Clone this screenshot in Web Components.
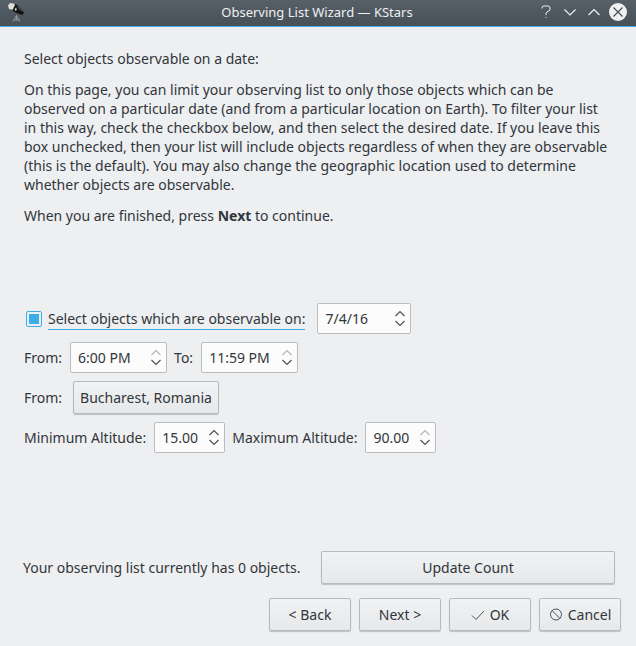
<!DOCTYPE html>
<html lang="en">
<head>
<meta charset="utf-8">
<meta name="viewport" content="width=device-width, initial-scale=1">
<title>Observing List Wizard — KStars</title>
<style>
    body {
        margin: 0;
        background: #eeeff1;
        color: #31363b;
        font: 14px/19px "Noto Sans", sans-serif;
    }
</style>
</head>
<body>
<kstars-wizard></kstars-wizard>

<script>
class WindowTitlebar extends HTMLElement {
    constructor() {
        super();
        const shadow = this.attachShadow({ mode: 'open' });
        shadow.innerHTML = `
            <style>
                :host {
                    display: grid;
                    grid-template-columns: 1fr auto 1fr;
                    align-items: center;
                    height: 24px;
                    padding: 0 9px 2px 7px;
                    background: linear-gradient(#566068, #475057);
                    border-bottom: 1px solid #3daee9;
                    color: #eff0f1;
                    font-size: 13px;
                }
                svg { display: block; }
                h1 {
                    margin: 0;
                    font-size: inherit;
                    font-weight: normal;
                }
                .controls {
                    display: flex;
                    justify-content: flex-end;
                    gap: 6px;
                }
                button {
                    padding: 0;
                    border: 0;
                    background: none;
                    color: inherit;
                }
            </style>
            <svg width="18" height="22" viewBox="0 0 18 22" aria-hidden="true">
                <path d="M6 20.500l3.500-6 3.500 6M9.500 14v5M7 19h5" fill="none" stroke="#90979b" stroke-width="1"/>
                <path d="M5 2l5 2 7 7.500-1.500 2.500-6-2L3 8z" fill="#101214"/>
                <path d="M1 4.500L3 2l4 .5 1 1.500-2.500 5L2 8z" fill="#deded9"/>
                <path d="M7.500 9l1-2.500L10 8l-1 2z" fill="#c4c4be"/>
                <path d="M10 5.500l5 5" stroke="#666" stroke-width="1"/>
            </svg>
            <h1><slot></slot></h1>
            <div class="controls">
                <button aria-label="Help"><svg width="18" height="18" viewBox="0 0 18 18" fill="none" stroke="currentColor"><path d="M5 5.500V5q0-2 2-2h4q2 0 2 2v1q0 1-1 2l-2 1q-1 .5-1 1.500V12M8.500 14.500h1"/></svg></button>
                <button aria-label="Minimize"><svg width="18" height="18" viewBox="0 0 18 18" fill="none" stroke="currentColor" stroke-width="1.200"><path d="M3.500 6.500L9 12l5.500-5.500"/></svg></button>
                <button aria-label="Maximize"><svg width="18" height="18" viewBox="0 0 18 18" fill="none" stroke="currentColor" stroke-width="1.200"><path d="M3.500 12L9 6.500l5.500 5.500"/></svg></button>
                <button aria-label="Close"><svg width="18" height="18" viewBox="0 0 18 18"><circle cx="9" cy="9" r="9" fill="#eff0f1"/><path d="M4.500 4.500l9 9M13.500 4.500l-9 9" stroke="#475057" stroke-width="1.200"/></svg></button>
            </div>
        `;
    }
}

class SpinField extends HTMLElement {
    constructor() {
        super();
        const shadow = this.attachShadow({ mode: 'open' });
        shadow.innerHTML = `
            <style>
                :host {
                    display: inline-flex;
                    align-items: center;
                    box-sizing: border-box;
                    width: var(--spin-width, 97px);
                    height: 31px;
                    padding: 0 4px 0 7px;
                    border: 1px solid #bbbdbf;
                    border-radius: 2px;
                    background: #fcfcfc;
                }
                input {
                    flex: 1;
                    min-width: 0;
                    padding: 0;
                    border: 0;
                    outline: 0;
                    background: none;
                    color: inherit;
                    font: inherit;
                }
                .arrows {
                    display: flex;
                    flex-direction: column;
                }
                button {
                    padding: 0;
                    border: 0;
                    background: none;
                    color: #4d5257;
                }
                button:disabled { color: #b4b6b8; }
                svg { display: block; }
            </style>
            <input type="text">
            <div class="arrows">
                <button class="up" tabindex="-1" aria-label="Increase"><svg width="12" height="9" viewBox="0 0 12 9" fill="none" stroke="currentColor" stroke-width="1.200"><path d="M1.500 6L6 1.500 10.500 6"/></svg></button>
                <button tabindex="-1" aria-label="Decrease"><svg width="12" height="9" viewBox="0 0 12 9" fill="none" stroke="currentColor" stroke-width="1.200"><path d="M1.500 2L6 6.500 10.500 2"/></svg></button>
            </div>
        `;
    }

    connectedCallback() {
        const input = this.shadowRoot.querySelector('input');
        input.value = this.getAttribute('value') || '';
        input.setAttribute('aria-label', this.getAttribute('label') || '');
        this.shadowRoot.querySelector('.up').disabled = this.hasAttribute('at-max');
    }
}

class PushButton extends HTMLElement {
    constructor() {
        super();
        const shadow = this.attachShadow({ mode: 'open' });
        shadow.innerHTML = `
            <style>
                :host { display: inline-flex; }
                button {
                    flex: 1;
                    display: flex;
                    align-items: center;
                    justify-content: center;
                    gap: 5px;
                    height: 33px;
                    padding: 0 6px;
                    border: 1px solid #b8babc;
                    border-radius: 2px;
                    background: linear-gradient(#f1f2f3, #e7e8ea);
                    box-shadow: 0 1px 1px #0003;
                    color: inherit;
                    font: inherit;
                    white-space: nowrap;
                }
            </style>
            <button type="button"><slot name="icon"></slot><slot></slot></button>
        `;
    }
}

class KstarsWizard extends HTMLElement {
    constructor() {
        super();
        const shadow = this.attachShadow({ mode: 'open' });
        shadow.innerHTML = `
            <style>
                :host {
                    display: flex;
                    flex-direction: column;
                    min-height: 100vh;
                }
                main {
                    flex: 1;
                    display: flex;
                    flex-direction: column;
                    padding: 22px 21px 14px 23px;
                }
                p { margin: 0 4px 12px 1px; }
                form {
                    display: flex;
                    flex-direction: column;
                    gap: 8px;
                    margin: 66px 0 32px 1px;
                }
                .row {
                    display: flex;
                    align-items: center;
                    gap: 7px;
                }
                .row > span, .row > label { margin-right: 1px; }
                .check {
                    display: flex;
                    align-items: center;
                    gap: 6px;
                }
                .check span {
                    padding: 2px 0 1px;
                    border-bottom: 1px solid #3daee9;
                }
                input {
                    appearance: none;
                    width: 16px;
                    height: 16px;
                    margin: 0 0 0 2px;
                    border: 1px solid #3daee9;
                    border-radius: 2px;
                }
                input:checked {
                    background: #3daee9 content-box;
                    padding: 2px;
                }
                .date { gap: 11px; }
                .date spin-field { --spin-width: 94px; }
                .altitude spin-field { --spin-width: 71px; }
                .place { gap: 10px; }
                .count {
                    display: flex;
                    align-items: center;
                    gap: 20px;
                    margin-top: auto;
                }
                .count push-button {
                    flex: 1;
                    max-width: 294px;
                    margin-left: auto;
                }
                footer {
                    display: flex;
                    justify-content: flex-end;
                    gap: 8px;
                    padding: 0 15px 15px;
                }
                footer push-button { width: 82px; }
                svg { display: block; }
            </style>
            <window-titlebar>Observing List Wizard — KStars</window-titlebar>
            <main>
                <p>Select objects observable on a date:</p>
                <p>On this page, you can limit your observing list to only those objects which can be observed on a particular date (and from a particular location on Earth). To filter your list in this way, check the checkbox below, and then select the desired date. If you leave this box unchecked, then your list will include objects regardless of when they are observable (this is the default). You may also change the geographic location used to determine whether objects are observable.</p>
                <p>When you are finished, press <b>Next</b> to continue.</p>
                <form>
                    <div class="row date">
                        <label class="check"><input type="checkbox" checked><span>Select objects which are observable on:</span></label>
                        <spin-field label="Date" value="7/4/16"></spin-field>
                    </div>
                    <div class="row">
                        <span>From:</span>
                        <spin-field label="From" value="6:00 PM" at-max></spin-field>
                        <span>To:</span>
                        <spin-field label="To" value="11:59 PM" at-max></spin-field>
                    </div>
                    <div class="row place">
                        <span>From:</span>
                        <push-button>Bucharest, Romania</push-button>
                    </div>
                    <div class="row altitude">
                        <span>Minimum Altitude:</span>
                        <spin-field label="Minimum Altitude" value="15.00"></spin-field>
                        <span>Maximum Altitude:</span>
                        <spin-field label="Maximum Altitude" value="90.00" at-max></spin-field>
                    </div>
                </form>
                <div class="count">
                    <span>Your observing list currently has 0 objects.</span>
                    <push-button>Update Count</push-button>
                </div>
            </main>
            <footer>
                <push-button>&lt; Back</push-button>
                <push-button>Next &gt;</push-button>
                <push-button><svg slot="icon" width="14" height="14" viewBox="0 0 14 14" fill="none" stroke="#4d5257"><path d="M1 7.500l4 4 8-8.500"/></svg>OK</push-button>
                <push-button><svg slot="icon" width="14" height="14" viewBox="0 0 14 14" fill="none" stroke="#4d5257"><circle cx="7" cy="6.500" r="5.500"/><path d="M3 2.500l8 8"/></svg>Cancel</push-button>
            </footer>
        `;
    }
}

customElements.define('window-titlebar', WindowTitlebar);
customElements.define('spin-field', SpinField);
customElements.define('push-button', PushButton);
customElements.define('kstars-wizard', KstarsWizard);
</script>
</body>
</html>
